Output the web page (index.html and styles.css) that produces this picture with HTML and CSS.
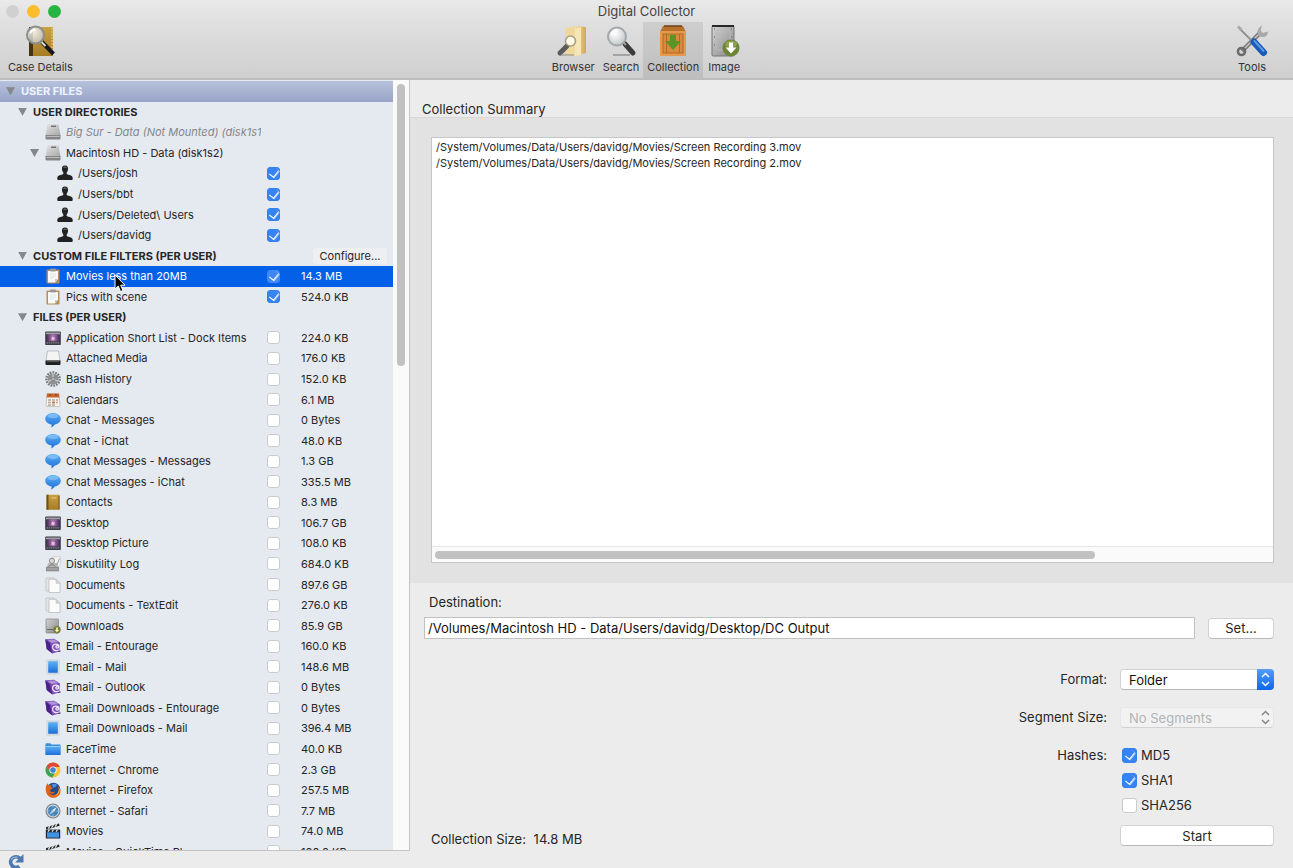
FILE: index.html
```html
<!DOCTYPE html>
<html lang="en">
<head>
    <meta charset="UTF-8">
    <meta name="viewport" content="width=device-width, initial-scale=1.0">
    <title>Digital Collector</title>
    <link rel="stylesheet" href="styles.css">
</head>
<body>
    <svg class="defs" aria-hidden="true">
        <defs>
            <linearGradient id="gMetal" x1="0" y1="0" x2="1" y2="1">
                <stop offset="0" stop-color="#d4d4d4"/><stop offset="1" stop-color="#858585"/>
            </linearGradient>
            <linearGradient id="gSilver" x1="0" y1="0" x2="1" y2="1">
                <stop offset="0" stop-color="#e2e2e2"/><stop offset="1" stop-color="#a8a8a8"/>
            </linearGradient>
            <linearGradient id="gGold" x1="0" y1="0" x2="0" y2="1">
                <stop offset="0" stop-color="#c9a145"/><stop offset="1" stop-color="#a67c25"/>
            </linearGradient>
            <linearGradient id="gBlue" x1="0" y1="0" x2="0" y2="1">
                <stop offset="0" stop-color="#5fb0f5"/><stop offset="1" stop-color="#1b6fd8"/>
            </linearGradient>
            <linearGradient id="gSpace" x1="0" y1="0" x2="1" y2="0">
                <stop offset="0" stop-color="#3a2c52"/><stop offset=".5" stop-color="#b678b4"/><stop offset="1" stop-color="#3c2c5c"/>
            </linearGradient>
            <linearGradient id="gTan" x1="0" y1="0" x2="1" y2="0">
                <stop offset="0" stop-color="#f3dfa4"/><stop offset="1" stop-color="#cfa75c"/>
            </linearGradient>
            <radialGradient id="gLens" cx=".4" cy=".35" r=".7">
                <stop offset="0" stop-color="#ffffff"/><stop offset="1" stop-color="#bfc4c6"/>
            </radialGradient>
        </defs>
        <symbol id="drive" viewBox="0 0 16 16">
            <path d="M2.500.5h11l2 11H.5z" fill="url(#gSilver)"/>
            <path d="M.5 11h15v3.500q0 1-1 1h-13q-1 0-1-1z" fill="#858585"/>
            <path d="M1.500 12.500h13" stroke="#bcbcbc"/>
            <path d="M6 2.200h5" stroke="#4a4a4a"/>
        </symbol>
        <symbol id="user" viewBox="0 0 16 16">
            <path d="M8 .5c2.300 0 3.300 1.700 3 3.900-.2 1.600-1 2.300-1.300 3.300-.2 1 .1 1.600 1 1.900 2.300.6 4.700 1 5 3.200V14q0 .9-.9.900H1.200q-.9 0-.9-.9v-1.200c.3-2.200 2.700-2.600 5-3.200.9-.3 1.200-.9 1-1.900-.3-1-1.100-1.700-1.300-3.300C4.700 2.200 5.700.5 8 .5z" fill="#222"/>
            <path d="M6.500 2.500q1.500-1 3 0" stroke="#777" fill="none"/>
        </symbol>
        <symbol id="clipboard" viewBox="0 0 16 16">
            <rect x="1.500" y="1.500" width="13" height="14" rx="1" fill="#b98c58"/>
            <path d="M3 3h10v8l-3 3.500H3z" fill="#fafafa"/>
            <path d="M13 11h-3v3.500z" fill="#c8c8c8"/>
            <rect x="5" y=".5" width="6" height="3" rx="1" fill="#999"/>
            <path d="M5 6h6M5 8h6M5 10h4" stroke="#d5d5d5" stroke-width=".6"/>
        </symbol>
        <symbol id="desktop" viewBox="0 0 16 16">
            <rect x=".2" y="1.500" width="15.600" height="13.500" rx=".8" fill="#3d3d45"/>
            <rect x="1" y="2.500" width="14" height="2" fill="#a29ea8"/>
            <rect x="1.200" y="4.500" width="13.600" height="6.800" fill="url(#gSpace)"/>
            <path d="M7.500 6l.8 1.200 1.600-.3-.7 1.400 1.300 1-1.700.2-.6 1.300-.9-1.300-1.600-.1 1.200-1.100-.7-1.300 1.500.3z" fill="#f3c1e2"/>
            <path d="M1.500 12.900h13" stroke="#96929e" stroke-dasharray="1.500 .7"/>
        </symbol>
        <symbol id="media" viewBox="0 0 16 16">
            <path d="M2.500 1h11l1.500 9.500H1z" fill="#f4f4f4" stroke="#aaa" stroke-width=".7"/>
            <path d="M.5 10.500h15v3.500q0 1-1 1h-13q-1 0-1-1z" fill="#1f1f1f"/>
            <path d="M2 11.700h12" stroke="#6c6c6c" stroke-width=".8"/>
        </symbol>
        <symbol id="gear" viewBox="0 0 16 16">
            <circle cx="8" cy="8" r="6.600" fill="none" stroke="#777" stroke-width="2.400" stroke-dasharray="1.700 1.060"/>
            <circle cx="8" cy="8" r="5.500" fill="#8f9192"/>
            <path d="M8 8V2.500M8 8l5 2M8 8l-5 2.500" stroke="#d8d8d8"/>
            <circle cx="8" cy="8" r="1.500" fill="#c9c9c9" stroke="#666" stroke-width=".6"/>
        </symbol>
        <symbol id="calendar" viewBox="0 0 16 16">
            <path d="M2 2h12l1 11.500q0 1-1 1H2q-1 0-1-1z" fill="#f7f2ec" stroke="#b5a99c" stroke-width=".6"/>
            <path d="M2 1.500h12l.4 4H1.600z" fill="#c9672c"/>
            <path d="M4 3h2M10 3h2" stroke="#7c3510"/>
            <path d="M3 8h3M7 8h3M11 8h2M3 10.500h3M7 10.500h3M11 10.500h2M3 13h3M7 13h3" stroke="#b0a79f" stroke-width="1.300"/>
            <path d="M7 10.500h3" stroke="#d26f33" stroke-width="1.600"/>
        </symbol>
        <symbol id="chat" viewBox="0 0 16 16">
            <path d="M8 1c4.300 0 7.800 2.500 7.800 5.800 0 3-2.700 5.300-6.100 5.700-.8 1.400-2.200 2.500-3.700 2.900.6-1 .8-1.900.6-2.900C3 12 .2 9.800.2 6.800.2 3.500 3.700 1 8 1z" fill="url(#gBlue)"/>
            <ellipse cx="8" cy="4" rx="5.500" ry="2.200" fill="#a8d7fb" opacity=".45"/>
        </symbol>
        <symbol id="book" viewBox="0 0 16 16">
            <rect x="1.500" y=".7" width="13" height="15" rx=".7" fill="url(#gGold)"/>
            <rect x="1.500" y=".7" width="2" height="15" fill="#70501a"/>
            <rect x="6.500" y="3" width="5" height="2" fill="#d5b565"/>
            <path d="M14 1.500v14" stroke="#70501a"/>
        </symbol>
        <symbol id="disklog" viewBox="0 0 16 16">
            <path d="M8 .7h7.500v8L13 12H8z" fill="#f4f4f4" stroke="#bbb" stroke-width=".5"/>
            <path d="M2 10l1.500-3h8.500l1.500 3v1.500H1.500z" fill="#b8b8b8"/>
            <path d="M1 11h13v4.300H1z" fill="#8c8c8c"/>
            <path d="M2 13h11" stroke="#b8b8b8"/>
            <circle cx="7" cy="4.800" r="2.600" fill="#d8d8d8" stroke="#8a8a8a"/>
            <path d="M3.500 10.500q3.500-3.500 7 0" stroke="#777" fill="none"/>
            <path d="M14.500 2.500l-2.500 6" stroke="#999"/>
        </symbol>
        <symbol id="docs" viewBox="0 0 16 16">
            <path d="M1 1h8v13H1z" fill="#e5e5e5" stroke="#b5b5b5" stroke-width=".6"/>
            <path d="M4 2.300h7l4 4v9.200H4z" fill="#fbfbfb" stroke="#aaa" stroke-width=".6"/>
            <path d="M11 2.300v4h4z" fill="#d8d8d8" stroke="#b5b5b5" stroke-width=".5"/>
        </symbol>
        <symbol id="downloads" viewBox="0 0 16 16">
            <rect x="1" y="1" width="12.500" height="14" rx=".8" fill="url(#gMetal)" stroke="#777" stroke-width=".6"/>
            <path d="M2 11.500h10" stroke="#666"/>
            <circle cx="12" cy="11.800" r="3.700" fill="#77803a"/>
            <path d="M11.200 9.500h1.600V12h1.400L12 14.200 9.800 12h1.400z" fill="#fff6c0"/>
        </symbol>
        <symbol id="entourage" viewBox="0 0 16 16">
            <path d="M.3 1.200L9 .8l6 3.700-.7 9-7 2L1.700 11z" fill="#7c4fb8"/>
            <path d="M.3 1.200l4.700 4 2.300 10.300L1.700 11z" fill="#4b2388"/>
            <path d="M2.500 1.800l6.500-.3 4 2.500-6.500 1z" fill="#b294da"/>
            <path d="M14 12c-3.800 1.700-6.800-.2-6.400-3.400.5-3 6-3.500 6.300-.4.100 2.300-3.300 2.500-3 .4.300-1.400 2.200-1 2.400 0" fill="none" stroke="#f0e8fa" stroke-width="1.200"/>
            <path d="M13 13.500l2.700-.5" stroke="#4b2388"/>
        </symbol>
        <symbol id="mail" viewBox="0 0 16 16">
            <rect x="1" y=".5" width="14" height="15" rx="1" fill="#ced6dd"/>
            <rect x="3.200" y="2.300" width="9.600" height="11.400" rx=".6" fill="url(#gBlue)"/>
            <path d="M2 1.500v13M14 1.500v13" stroke="#fff" stroke-width=".6" stroke-dasharray="1 1"/>
        </symbol>
        <symbol id="folder" viewBox="0 0 16 16">
            <path d="M.5 3q0-.7.7-.7h4l1.300 1.200h8.300q.7 0 .7.700v3H.5z" fill="#3b8fd6"/>
            <rect x=".3" y="5" width="15.400" height="9" rx=".7" fill="url(#gBlue)"/>
            <path d="M.8 5.500h14.400" stroke="#a9dcfb" stroke-width=".7"/>
        </symbol>
        <symbol id="chrome" viewBox="0 0 16 16">
            <circle cx="8" cy="8" r="7.500" fill="#f6c934"/>
            <path d="M1.500 4.250A7.500 7.500 0 0 0 7.500 15.500L10.600 9.500 8 8 5.400 9.500z" fill="#3ea054"/>
            <path d="M1.500 4.250A7.500 7.500 0 0 1 14.900 5H8L5.400 9.500z" fill="#df4937"/>
            <circle cx="8" cy="8" r="3.600" fill="#fff"/>
            <circle cx="8" cy="8" r="2.800" fill="#3f83d8"/>
        </symbol>
        <symbol id="firefox" viewBox="0 0 16 16">
            <circle cx="8.500" cy="7.500" r="6.800" fill="#214b8c"/>
            <path d="M7 2.500q3-1.500 5 .5l-1.500 2L8 6z" fill="#4b92d4"/>
            <path d="M.8 5C1 3.500 1.800 2 2.800 1.200c0 1 .3 1.700 1 2.300 1.200-.5 2.400-.3 3.200.1-1.600.7-1 2 .6 2.200-.5 1.800-2.300 1.500-2.500 2.800.3 1.700 3 1.900 5 .9-1.300 3-5.300 2.500-6 1 1.200 3.200 8 3.500 9.300-1.300.4-1.700.1-3.500-.8-5.200 2 1.500 3 3.600 2.900 5.700-.2 3.500-3.500 6.100-7.200 6.100C3.700 15.800 0 12.200.8 5z" fill="#dc6519"/>
            <path d="M14.300 6c1 3.500-.7 7.500-5 8.500 3-2 4.500-4.500 5-8.500z" fill="#f7bf3b"/>
        </symbol>
        <symbol id="safari" viewBox="0 0 16 16">
            <circle cx="8" cy="8" r="7.500" fill="#7b8289"/>
            <circle cx="8" cy="8" r="6.400" fill="#c8d2da"/>
            <circle cx="8" cy="8" r="5.300" fill="#4484bd"/>
            <path d="M12 4L9 9 7 7z" fill="#e3ebf2"/>
            <path d="M4 12l3-5 2 2z" fill="#b5c8d8"/>
            <path d="M8 3v1.500M8 11.500V13M3 8h1.500M11.500 8H13" stroke="#dbe8f2" stroke-width=".6"/>
        </symbol>
        <symbol id="movies" viewBox="0 0 16 16">
            <rect x=".8" y="6.500" width="14.400" height="9" rx=".5" fill="#222a33"/>
            <rect x="2" y="9.300" width="12" height="5.300" fill="#3e93e0"/>
            <path d="M.8 4.300L14 .5l.6 2.200L1.400 6.500z" fill="#222"/>
            <path d="M3 5.600l2-2.400M6.500 4.600l2-2.400M10 3.600l2-2.400M3 8.700l1.500-2M7 8.700l1.500-2M11 8.700l1.500-2" stroke="#eee" stroke-width="1.100"/>
        </symbol>
    </svg>

    <div class="window">
        <header class="titlebar">
            <div class="lights">
                <span class="light off"></span>
                <span class="light yellow"></span>
                <span class="light green"></span>
            </div>
            <h1>Digital Collector</h1>
        </header>

        <nav class="toolbar">
            <div class="tools-left">
                <button class="tool">
                    <svg viewBox="0 0 34 34">
                        <rect x="6" y="3" width="24" height="29" rx="1" fill="url(#gGold)"/>
                        <rect x="6" y="3" width="4" height="29" fill="#433414"/>
                        <path d="M29 4v27" stroke="#d8bd76" stroke-width="1.500" stroke-dasharray="2 1"/>
                        <path d="M19 18l11.500 12" stroke="#181818" stroke-width="4"/>
                        <path d="M18.500 18l4 4" stroke="#ddd" stroke-width="2"/>
                        <circle cx="12.500" cy="11" r="8.500" fill="url(#gLens)" fill-opacity=".8" stroke="#8c8c88" stroke-width="2"/>
                        <path d="M7 9.500q1.500-4 6-4" stroke="#fff" stroke-width="2" fill="none"/>
                    </svg>
                    <span>Case Details</span>
                </button>
            </div>
            <div class="tools-center">
                <button class="tool">
                    <svg viewBox="0 0 34 34">
                        <path d="M9 4l10-2v30H9z" fill="#efd99f"/>
                        <path d="M19 2l11 1v26l-11 3z" fill="url(#gTan)"/>
                        <path d="M19 5l6-2v28l-6 1z" fill="#f6e6b6"/>
                        <path d="M11 22l-7 7" stroke="#5b5b5b" stroke-width="5" stroke-linecap="round"/>
                        <path d="M5 31h13" stroke="#999" stroke-width="2" opacity=".6"/>
                        <circle cx="14.500" cy="17" r="5" fill="#fffbe6" stroke="#a69d87" stroke-width="1.500"/>
                    </svg>
                    <span>Browser</span>
                </button>
                <button class="tool">
                    <svg viewBox="0 0 34 34">
                        <path d="M9 31h17" stroke="#a3a3a3" stroke-width="2"/>
                        <path d="M21 20l8 9" stroke="#3b3b3b" stroke-width="5" stroke-linecap="round"/>
                        <path d="M19 18l3 3" stroke="#999" stroke-width="2"/>
                        <circle cx="13" cy="12.500" r="9" fill="url(#gLens)" stroke="#a5a8aa" stroke-width="2"/>
                        <path d="M7 11q2-5 7-5" stroke="#fff" stroke-width="2" fill="none"/>
                    </svg>
                    <span>Search</span>
                </button>
                <button class="tool active">
                    <svg viewBox="0 0 34 34">
                        <path d="M7 2h20l3 6H4z" fill="#b96f2c"/>
                        <rect x="4" y="7" width="26" height="25" rx="1" fill="#e59a4b"/>
                        <rect x="7" y="10" width="20" height="19" fill="#d98a3c" stroke="#b4682a"/>
                        <path d="M10.500 10v19M23.500 10v19" stroke="#b4682a"/>
                        <path d="M8 2h18" stroke="#714118" stroke-width="1.500"/>
                        <path d="M14 11h6v6h5l-8 9-8-9h5z" fill="#5a9426"/>
                    </svg>
                    <span>Collection</span>
                </button>
                <button class="tool">
                    <svg viewBox="0 0 34 34">
                        <rect x="5" y="2" width="22" height="30" rx="1" fill="url(#gMetal)" stroke="#777"/>
                        <path d="M5 2h22" stroke="#292929" stroke-width="2"/>
                        <rect x="9" y="6" width="14" height="20" rx="2" fill="none" stroke="#bababa"/>
                        <path d="M7.500 4.500v24M24.500 4.500v24" stroke="#666" stroke-dasharray="1 7"/>
                        <circle cx="24" cy="24" r="8.500" fill="#6e8436"/>
                        <ellipse cx="24" cy="20" rx="6" ry="3.500" fill="#9aad62" opacity=".7"/>
                        <path d="M22 18.500h4v5h3.500L24 29.500l-5.500-6H22z" fill="#fff"/>
                    </svg>
                    <span>Image</span>
                </button>
            </div>
            <div class="tools-right">
                <button class="tool">
                    <svg viewBox="0 0 34 34">
                        <path d="M7 27L26 8" stroke="#777" stroke-width="4.500"/>
                        <path d="M8 26L26 8" stroke="#c6c6c6" stroke-width="1.500"/>
                        <path d="M27 1.500l-1.500 5 2.500 2.500 5-1.500c0 5-4.500 7-9 4.500-3-4-1-8.500 3-10.500z" fill="#a8a8a8"/>
                        <circle cx="6.500" cy="27.500" r="3.600" fill="none" stroke="#6b6b6b" stroke-width="2.500"/>
                        <path d="M4 4l13 13" stroke="#939393" stroke-width="2"/>
                        <path d="M3 2.500l3.500 3.500" stroke="#aaa" stroke-width="3"/>
                        <path d="M19 18l9.500 10.500" stroke="#1a5ab8" stroke-width="7" stroke-linecap="round"/>
                        <path d="M19.500 17l9 10" stroke="#5c9ae4" stroke-width="2" stroke-linecap="round"/>
                    </svg>
                    <span>Tools</span>
                </button>
            </div>
        </nav>

        <div class="content">
            <aside class="sidebar">
                <div class="scroller">
                    <ul class="tree">
                        <li class="row root"><span class="arrow"></span>USER FILES</li>
                        <li class="row group"><span class="arrow"></span>USER DIRECTORIES</li>
                        <li class="row item unmounted"><svg><use href="#drive"/></svg><span class="name">Big Sur - Data (Not Mounted) (disk1s1)</span></li>
                        <li class="row item volume"><span class="arrow"></span><svg><use href="#drive"/></svg><span class="name">Macintosh HD - Data (disk1s2)</span></li>
                        <li><label class="row item nested"><svg><use href="#user"/></svg><span class="name">/Users/josh</span><input type="checkbox" checked></label></li>
                        <li><label class="row item nested"><svg><use href="#user"/></svg><span class="name">/Users/bbt</span><input type="checkbox" checked></label></li>
                        <li><label class="row item nested"><svg><use href="#user"/></svg><span class="name">/Users/Deleted\ Users</span><input type="checkbox" checked></label></li>
                        <li><label class="row item nested"><svg><use href="#user"/></svg><span class="name">/Users/davidg</span><input type="checkbox" checked></label></li>
                        <li class="row group"><span class="arrow"></span>CUSTOM FILE FILTERS (PER USER)<button class="configure">Configure...</button></li>
                        <li><label class="row item selected"><svg><use href="#clipboard"/></svg><span class="name">Movies less than 20MB</span><input type="checkbox" checked><span class="size">14.3 MB</span>
                            <svg class="cursor" viewBox="0 0 12 19"><path d="M1 1v14l3.300-3 2.200 5.500 2.500-1-2.300-5.300H11z" fill="#000" stroke="#fff"/></svg></label></li>
                        <li><label class="row item"><svg><use href="#clipboard"/></svg><span class="name">Pics with scene</span><input type="checkbox" checked><span class="size">524.0 KB</span></label></li>
                        <li class="row group"><span class="arrow"></span>FILES (PER USER)</li>
                        <li><label class="row item"><svg><use href="#desktop"/></svg><span class="name">Application Short List - Dock Items</span><input type="checkbox"><span class="size">224.0 KB</span></label></li>
                        <li><label class="row item"><svg><use href="#media"/></svg><span class="name">Attached Media</span><input type="checkbox"><span class="size">176.0 KB</span></label></li>
                        <li><label class="row item"><svg><use href="#gear"/></svg><span class="name">Bash History</span><input type="checkbox"><span class="size">152.0 KB</span></label></li>
                        <li><label class="row item"><svg><use href="#calendar"/></svg><span class="name">Calendars</span><input type="checkbox"><span class="size">6.1 MB</span></label></li>
                        <li><label class="row item"><svg><use href="#chat"/></svg><span class="name">Chat - Messages</span><input type="checkbox"><span class="size">0 Bytes</span></label></li>
                        <li><label class="row item"><svg><use href="#chat"/></svg><span class="name">Chat - iChat</span><input type="checkbox"><span class="size">48.0 KB</span></label></li>
                        <li><label class="row item"><svg><use href="#chat"/></svg><span class="name">Chat Messages - Messages</span><input type="checkbox"><span class="size">1.3 GB</span></label></li>
                        <li><label class="row item"><svg><use href="#chat"/></svg><span class="name">Chat Messages - iChat</span><input type="checkbox"><span class="size">335.5 MB</span></label></li>
                        <li><label class="row item"><svg><use href="#book"/></svg><span class="name">Contacts</span><input type="checkbox"><span class="size">8.3 MB</span></label></li>
                        <li><label class="row item"><svg><use href="#desktop"/></svg><span class="name">Desktop</span><input type="checkbox"><span class="size">106.7 GB</span></label></li>
                        <li><label class="row item"><svg><use href="#desktop"/></svg><span class="name">Desktop Picture</span><input type="checkbox"><span class="size">108.0 KB</span></label></li>
                        <li><label class="row item"><svg><use href="#disklog"/></svg><span class="name">Diskutility Log</span><input type="checkbox"><span class="size">684.0 KB</span></label></li>
                        <li><label class="row item"><svg><use href="#docs"/></svg><span class="name">Documents</span><input type="checkbox"><span class="size">897.6 GB</span></label></li>
                        <li><label class="row item"><svg><use href="#docs"/></svg><span class="name">Documents - TextEdit</span><input type="checkbox"><span class="size">276.0 KB</span></label></li>
                        <li><label class="row item"><svg><use href="#downloads"/></svg><span class="name">Downloads</span><input type="checkbox"><span class="size">85.9 GB</span></label></li>
                        <li><label class="row item"><svg><use href="#entourage"/></svg><span class="name">Email - Entourage</span><input type="checkbox"><span class="size">160.0 KB</span></label></li>
                        <li><label class="row item"><svg><use href="#mail"/></svg><span class="name">Email - Mail</span><input type="checkbox"><span class="size">148.6 MB</span></label></li>
                        <li><label class="row item"><svg><use href="#entourage"/></svg><span class="name">Email - Outlook</span><input type="checkbox"><span class="size">0 Bytes</span></label></li>
                        <li><label class="row item"><svg><use href="#entourage"/></svg><span class="name">Email Downloads - Entourage</span><input type="checkbox"><span class="size">0 Bytes</span></label></li>
                        <li><label class="row item"><svg><use href="#mail"/></svg><span class="name">Email Downloads - Mail</span><input type="checkbox"><span class="size">396.4 MB</span></label></li>
                        <li><label class="row item"><svg><use href="#folder"/></svg><span class="name">FaceTime</span><input type="checkbox"><span class="size">40.0 KB</span></label></li>
                        <li><label class="row item"><svg><use href="#chrome"/></svg><span class="name">Internet - Chrome</span><input type="checkbox"><span class="size">2.3 GB</span></label></li>
                        <li><label class="row item"><svg><use href="#firefox"/></svg><span class="name">Internet - Firefox</span><input type="checkbox"><span class="size">257.5 MB</span></label></li>
                        <li><label class="row item"><svg><use href="#safari"/></svg><span class="name">Internet - Safari</span><input type="checkbox"><span class="size">7.7 MB</span></label></li>
                        <li><label class="row item"><svg><use href="#movies"/></svg><span class="name">Movies</span><input type="checkbox"><span class="size">74.0 MB</span></label></li>
                        <li><label class="row item"><svg><use href="#movies"/></svg><span class="name">Movies - QuickTime Pl...</span><input type="checkbox"><span class="size">100.0 KB</span></label></li>
                    </ul>
                    <div class="track"><div class="thumb"></div></div>
                </div>
                <div class="sidebar-footer">
                    <button class="refresh" aria-label="Refresh">
                        <svg viewBox="0 0 16 16"><path d="M11.500 12.500A5 5 0 1 1 12 5" fill="none" stroke="#4c7ab0" stroke-width="3.500"/><path d="M15.500 1v8h-8z" fill="#4c7ab0"/><path d="M4 6q2-3 6-2" fill="none" stroke="#9dbbdc"/></svg>
                    </button>
                </div>
            </aside>

            <main class="main">
                <section class="summary">
                    <h2>Collection Summary</h2>
                    <div class="summary-box">
                        <div class="file-list">
                            <div class="files">
                                <p>/System/Volumes/Data/Users/davidg/Movies/Screen Recording 3.mov</p>
                                <p>/System/Volumes/Data/Users/davidg/Movies/Screen Recording 2.mov</p>
                            </div>
                            <div class="hscroll"><div class="hthumb"></div></div>
                        </div>
                    </div>
                </section>

                <form class="settings">
                    <label for="destination" class="dest-label">Destination:</label>
                    <div class="dest-row">
                        <input type="text" id="destination" value="/Volumes/Macintosh HD - Data/Users/davidg/Desktop/DC Output">
                        <button type="button" class="btn">Set...</button>
                    </div>
                    <div class="bottom">
                        <p class="total">Collection Size: <span>14.8 MB</span></p>
                        <div class="options">
                            <label for="format">Format:</label>
                            <div class="select">
                                <select id="format"><option>Folder</option></select>
                                <svg class="stepper" viewBox="0 0 17 21"><path d="M5 8l3.500-3.500L12 8M5 13l3.500 3.500L12 13"/></svg>
                            </div>
                            <label for="segment">Segment Size:</label>
                            <div class="select disabled">
                                <select id="segment" disabled><option>No Segments</option></select>
                                <svg class="stepper" viewBox="0 0 17 21"><path d="M5 8l3.500-3.500L12 8M5 13l3.500 3.500L12 13"/></svg>
                            </div>
                            <span class="hash-title">Hashes:</span>
                            <div class="hashes">
                                <label><input type="checkbox" checked>MD5</label>
                                <label><input type="checkbox" checked>SHA1</label>
                                <label><input type="checkbox">SHA256</label>
                            </div>
                            <button type="button" class="btn start">Start</button>
                        </div>
                    </div>
                </form>
            </main>
        </div>
    </div>
</body>
</html>
```
FILE: styles.css
```css
* {
    box-sizing: border-box;
}

body {
    margin: 0;
    font-family: Inter, "Liberation Sans", sans-serif;
    font-size: 13px;
    color: #262626;
    background: #ececec;
}

h1, h2, p, ul {
    margin: 0;
    padding: 0;
    font-weight: normal;
}

button, input, select {
    font: inherit;
    color: inherit;
}

.defs {
    position: absolute;
    width: 0;
    height: 0;
}

.window {
    height: 100vh;
    display: flex;
    flex-direction: column;
    overflow: hidden;
}

/* title bar + toolbar */
.titlebar {
    display: grid;
    grid-template-columns: 1fr auto 1fr;
    align-items: center;
    height: 22px;
    background: linear-gradient(#e9e9e9, #e0e0e0);
}

.lights {
    display: flex;
    gap: 8px;
    padding-left: 6px;
}

.light {
    width: 13px;
    height: 13px;
    border-radius: 50%;
}

.off { background: #d0d0d0; }
.yellow { background: #fdbc2e; }
.green { background: #28b440; }

h1 {
    font-size: 13px;
    color: #444;
}

.toolbar {
    display: grid;
    grid-template-columns: 1fr auto 1fr;
    height: 58px;
    background: linear-gradient(#e0e0e0, #cfcfcf);
    border-bottom: 2px solid #bdbdbd;
}

.tools-left, .tools-center, .tools-right {
    display: flex;
}

.tools-left { padding-left: 4px; }

.tools-right {
    justify-content: flex-end;
    padding-right: 20px;
}

.tool {
    display: flex;
    flex-direction: column;
    align-items: center;
    justify-content: flex-start;
    gap: 1px;
    padding: 2px 4px 0;
    border: 0;
    background: none;
    font-size: 11px;
    line-height: 16px;
    color: #333;
}

.tool svg {
    width: 34px;
    height: 34px;
}

.tool.active {
    background: rgba(0, 0, 0, 0.08);
}

.content {
    flex: 1;
    display: flex;
    min-height: 0;
}

/* sidebar */
.sidebar {
    flex: 0 0 410px;
    display: flex;
    flex-direction: column;
}

.scroller {
    flex: 1;
    display: flex;
    min-height: 0;
    overflow: hidden;
    border-right: 1px solid #c4c4c4;
    border-bottom: 1px solid #c4c4c4;
}

.tree {
    flex: 1;
    min-width: 0;
    display: grid;
    grid-auto-rows: 1fr;
    height: 782px;
    padding-top: 1px;
    list-style: none;
    font-size: 11px;
    background: #e5e9f0;
}

.row {
    position: relative;
    display: flex;
    align-items: center;
    height: 100%;
    white-space: nowrap;
}

.root {
    padding-left: 6px;
    font-weight: bold;
    color: #eef4ff;
    background: linear-gradient(#b7c1dc, #98a5c8);
}

.group {
    padding-left: 18px;
    font-weight: bold;
}

.arrow {
    flex: none;
    width: 9px;
    height: 8px;
    margin-right: 6px;
    background: #858789;
    clip-path: polygon(0 0, 100% 0, 50% 100%);
}

.item { padding-left: 45px; }
.item.volume { padding-left: 30px; }
.item.nested { padding-left: 57px; }

.item svg {
    flex: none;
    width: 16px;
    height: 16px;
    margin-right: 5px;
}

.name {
    flex: none;
    width: 195px;
    margin-right: 6px;
    overflow: hidden;
}

.nested .name { width: 183px; }

.unmounted {
    font-style: italic;
    color: #85878a;
}

.size {
    margin-left: 21px;
}

.selected {
    color: #fff;
    background: #0560e8;
}

.item .cursor {
    position: absolute;
    left: 114px;
    top: 8px;
    z-index: 1;
    width: 12px;
    height: 19px;
}

.configure {
    margin: 0 6px 0 auto;
    width: 74px;
    height: 16px;
    padding: 0;
    border: 0;
    border-radius: 3px;
    font-weight: normal;
    background: #edeff2;
}

.track {
    width: 16px;
    padding: 4px;
    background: #fafafa;
}

.thumb {
    height: 37%;
    border-radius: 4px;
    background: #c1c1c1;
}

.sidebar-footer {
    height: 17px;
    padding: 2px 7px;
    overflow: hidden;
}

.refresh {
    padding: 0;
    border: 0;
    background: none;
}

.refresh svg {
    display: block;
    width: 17px;
    height: 17px;
}

/* checkboxes */
input[type="checkbox"] {
    appearance: none;
    flex: none;
    display: grid;
    place-items: center;
    width: 13px;
    height: 13px;
    margin: 0;
    border: 1px solid #c9cbcd;
    border-radius: 3px;
    background: #fff;
}

input[type="checkbox"]:checked {
    border-color: #3281f0;
    background: #3783f3;
}

input[type="checkbox"]:checked::after {
    content: '';
    width: 5px;
    height: 8px;
    margin-bottom: 2px;
    border: solid #fff;
    border-width: 0 1px 1px 0;
    box-shadow: 1px 0 0 rgba(255, 255, 255, 0.5);
    transform: rotate(38deg);
}

.selected input[type="checkbox"]:checked {
    border-color: #3f88f5;
    background: #3f88f5;
}

/* main panel */
.main {
    flex: 1;
    display: flex;
    flex-direction: column;
    min-width: 0;
}

.summary {
    flex: 1;
    display: flex;
    flex-direction: column;
    min-height: 0;
}

h2 {
    padding: 21px 12px 0;
    font-size: 13px;
    line-height: 16px;
}

.summary-box {
    flex: 1;
    display: flex;
    padding: 19px 19px 20px 21px;
    border-top: 1px solid #d8d8d8;
    background: #e2e2e2;
}

.file-list {
    flex: 1;
    display: flex;
    flex-direction: column;
    border: 1px solid #c6c6c6;
    background: #fff;
}

.files {
    flex: 1;
    padding: 1px 4px;
    font-size: 11px;
    line-height: 16px;
}

.hscroll {
    height: 16px;
    padding: 4px 3px;
    border-top: 1px solid #e6e6e6;
    background: #fafafa;
}

.hthumb {
    width: 79%;
    height: 8px;
    border-radius: 4px;
    background: #c1c1c1;
}

.settings {
    padding: 11px 19px 22px 14px;
}

.dest-label {
    display: block;
    padding-left: 5px;
    line-height: 16px;
}

.dest-row {
    display: flex;
    align-items: center;
    gap: 13px;
    margin-top: 7px;
}

#destination {
    flex: 1;
    min-width: 0;
    height: 22px;
    padding: 0 3px;
    border: 1px solid #c2c2c2;
    background: #fff;
    color: #111;
}

.btn {
    width: 66px;
    height: 21px;
    padding: 0;
    border: 1px solid #d2d2d2;
    border-bottom-color: #b9b9b9;
    border-radius: 4px;
    background: #fff;
}

.bottom {
    display: flex;
    justify-content: space-between;
    align-items: flex-end;
    margin-top: 30px;
}

.total {
    padding-left: 7px;
    line-height: 14px;
}

.total span {
    margin-left: 4px;
}

.options {
    display: grid;
    grid-template-columns: auto 154px;
    column-gap: 13px;
    row-gap: 17px;
    line-height: 21px;
    text-align: right;
}

.select {
    position: relative;
    height: 21px;
}

.select select {
    appearance: none;
    display: block;
    width: 100%;
    height: 21px;
    padding: 0 20px 0 8px;
    border: 1px solid #d2d2d2;
    border-bottom-color: #b9b9b9;
    border-radius: 4px;
    background: #fff;
    color: #111;
}

.stepper {
    position: absolute;
    top: 0;
    right: 0;
    width: 17px;
    height: 21px;
    border-radius: 0 4px 4px 0;
    background: linear-gradient(#559df8, #0d66ee);
    fill: none;
    stroke: #fff;
    stroke-width: 1.500;
    pointer-events: none;
}

.select.disabled select {
    border-color: #e6e6e6;
    border-bottom-color: #d2d2d2;
    background: #f2f2f2;
    color: #b3b3b3;
    opacity: 1;
}

.disabled .stepper {
    background: none;
    stroke: #858585;
}

.hashes {
    display: flex;
    flex-direction: column;
    gap: 4px;
    padding-left: 2px;
}

.hashes label {
    display: flex;
    align-items: center;
    gap: 4px;
}

.hashes input[type="checkbox"] {
    width: 15px;
    height: 15px;
}

.start {
    grid-column: 2;
    width: auto;
    margin-top: -8px;
}
```
